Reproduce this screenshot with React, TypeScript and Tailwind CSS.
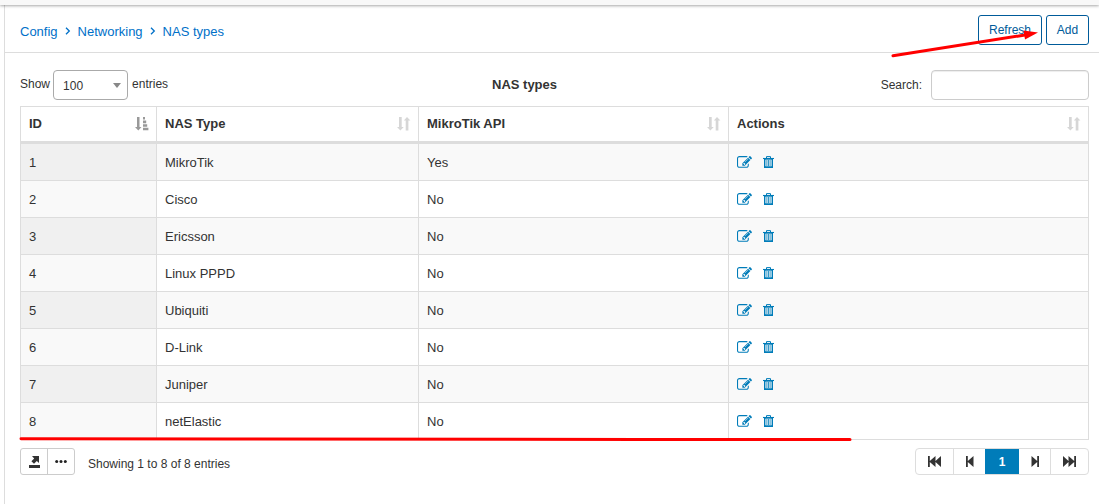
import type { ReactNode } from "react";

const rows = [
  ["1", "MikroTik", "Yes"],
  ["2", "Cisco", "No"],
  ["3", "Ericsson", "No"],
  ["4", "Linux PPPD", "No"],
  ["5", "Ubiquiti", "No"],
  ["6", "D-Link", "No"],
  ["7", "Juniper", "No"],
  ["8", "netElastic", "No"],
];

function EditIcon() {
  return (
    <svg className="h-[15px] w-[15px]" viewBox="0 0 1792 1792" fill="currentColor">
      <path d="M888 1184l116-116-152-152-116 116v56h96v96h56zm440-720q-16-16-33 1l-350 350q-17 17-1 33t33-1l350-350q17-17 1-33zm80 594v190q0 119-84.5 203.5t-203.5 84.5h-832q-119 0-203.5-84.5t-84.5-203.5v-832q0-119 84.5-203.5t203.5-84.5h832q63 0 117 25 15 7 18 23 3 17-9 29l-49 49q-14 14-32 8-23-6-45-6h-832q-66 0-113 47t-47 113v832q0 66 47 113t113 47h832q66 0 113-47t47-113v-126q0-13 9-22l64-64q15-15 35-7t20 29zm-96-738l288 288-672 672h-288v-288zm444 132l-92 92-288-288 92-92q28-28 68-28t68 28l152 152q28 28 28 68t-28 68z" />
    </svg>
  );
}

function TrashIcon() {
  return (
    <svg className="h-[12px] w-[11px]" viewBox="0 0 11 12" fill="none" stroke="currentColor">
      <path d="M0 2.5h11" strokeWidth="1.1" />
      <path d="M3.5 2.4V.6h4v1.8" strokeWidth="1" />
      <path d="M1.7 2.5v8.8h7.6V2.5" strokeWidth="1.4" />
      <path d="M3.9 4v6M5.5 4v6M7.1 4v6" strokeWidth=".8" />
      <path d="M1.5 3.2h8M1.5 11h8" strokeWidth="1" />
    </svg>
  );
}

function SortIcon({ active }: { active?: boolean }) {
  return active ? (
    <svg className="h-[14px] w-[14px]" viewBox="0 0 14 14" fill="#999">
      <path d="M2 0h2.5v10h2L3.3 13.5 0 10h2zM8 0h2v2.6H8zM8 3.6h3.2v2.6H8zM8 7.2h4.2v2.6H8zM8 10.8h5.4v2.5H8z" />
    </svg>
  ) : (
    <svg className="h-[14px] w-[14px]" viewBox="0 0 14 14" fill="#d6d6d6">
      <path d="M2 0h2.7v10h2L3.4 13.5 0 10h2zM8.7 13.4h2.7V3.5h2L10 0 6.8 3.5h1.9z" />
    </svg>
  );
}

function Head({ children, active }: { children: ReactNode; active?: boolean }) {
  return (
    <th className="h-[34px] border-r border-[#ddd] p-0 pr-[7px] pl-2 text-left font-bold">
      <div className="flex items-center justify-between">
        <span>{children}</span>
        <SortIcon active={active} />
      </div>
    </th>
  );
}

function PageIcon({ kind }: { kind: "first" | "prev" | "next" | "last" }) {
  const double = kind === "first" || kind === "last";
  const flip = kind === "next" || kind === "last";
  return (
    <svg
      className={double ? "h-[11px] w-[13px]" : "h-[11px] w-[8px]"}
      viewBox={double ? "0 0 13 11" : "0 0 8 11"}
      fill="#333"
    >
      <g transform={flip ? (double ? "matrix(-1 0 0 1 13 0)" : "matrix(-1 0 0 1 8 0)") : undefined}>
        <path d={double ? "M0 0h1.8v5L7.5 0v5L13 0v11L7.5 6v5L1.8 6v5H0z" : "M0 0h1.8v5L7.5 0v11L1.8 6v5H0z"} />
      </g>
    </svg>
  );
}

function Chevron() {
  return (
    <svg className="mx-[7px] mb-px h-[8px] w-[6px]" viewBox="0 0 6 8" fill="none" stroke="#0070c8" strokeWidth="1.3">
      <path d="M1 .7l3.3 3.3L1 7.3" />
    </svg>
  );
}

export default function App() {
  return (
    <div className="relative flex h-[504px] w-[1099px] flex-col overflow-hidden bg-white font-['Liberation_Sans',Arial,sans-serif] text-[13px] text-[#333]">
      <div className="z-10 h-[5px] shrink-0 bg-[#f8f8f8] shadow-[0_1px_3px_rgba(0,0,0,0.35)]" />
      <div className="ml-1 flex flex-1 flex-col border-l border-[#ddd]">
        <header className="flex h-[48px] shrink-0 items-center justify-between border-b border-[#ddd] pr-[10px] pl-[15px]">
          <nav className="flex items-center pt-[6px] text-[#0070c8]">
            <a>Config</a>
            <Chevron />
            <a>Networking</a>
            <Chevron />
            <a>NAS types</a>
          </nav>
          <div className="flex gap-1 pt-[3px] text-[12px] text-[#005b9a]">
            <button className="h-[30px] w-[64px] rounded-[3px] border border-[#005b9a]">Refresh</button>
            <button className="h-[30px] w-[43px] rounded-[3px] border border-[#005b9a]">Add</button>
          </div>
        </header>

        <main className="pt-[17px] pr-[10px] pl-[15px]">
          <div className="grid h-[30px] grid-cols-[472px_auto_1fr] items-center text-[12px]">
            <div className="flex items-center">
              <span className="pb-[3px]">Show</span>
              <div className="ml-[3px] flex h-[30px] w-[75px] items-center justify-between rounded-[4px] border border-[#aaa] pr-[6px] pl-[9px]">
                <span className="pt-px">100</span>
                <span className="border-x-4 border-t-[5px] border-x-transparent border-t-[#888]" />
              </div>
              <span className="ml-1 pb-[3px]">entries</span>
            </div>
            <b className="pb-px text-[13px]">NAS types</b>
            <label className="flex items-center justify-end gap-[9px]">
              Search:
              <input className="h-[30px] w-[158px] rounded-[4px] border border-[#ccc] shadow-[inset_0_1px_1px_rgba(0,0,0,0.075)]" />
            </label>
          </div>

          <table className="mt-[6px] w-[1069px] table-fixed border-separate border-spacing-0 border-t border-l border-[#ddd]">
            <colgroup>
              <col className="w-[136px]" />
              <col className="w-[262px]" />
              <col className="w-[310px]" />
              <col className="w-[360px]" />
            </colgroup>
            <thead>
              <tr>
                <Head active>ID</Head>
                <Head>NAS Type</Head>
                <Head>MikroTik API</Head>
                <Head>Actions</Head>
              </tr>
              <tr>
                <td colSpan={4} className="h-[3px] bg-[#ddd] p-0" />
              </tr>
            </thead>
            <tbody>
              {rows.map(([id, name, api], i) => (
                <tr key={id} className={i % 2 ? "bg-white" : "bg-[#f9f9f9]"}>
                  <td className={`h-[37px] border-r border-b border-[#ddd] p-0 pt-[2px] pl-2 ${i % 2 ? "bg-[#f9f9f9]" : "bg-[#f0f0f0]"}`}>{id}</td>
                  <td className="border-r border-b border-[#ddd] p-0 pt-[2px] pl-2">{name}</td>
                  <td className="border-r border-b border-[#ddd] p-0 pt-[2px] pl-2">{api}</td>
                  <td className="border-r border-b border-[#ddd] p-0 pl-2">
                    <div className="flex items-center gap-[11px] text-[#007cb9]">
                      <EditIcon />
                      <TrashIcon />
                    </div>
                  </td>
                </tr>
              ))}
            </tbody>
          </table>

          <div className="mt-2 flex h-[27px] items-center text-[12px]">
            <div className="flex h-[27px] w-[55px] rounded-[3px] border border-[#ccc]">
              <span className="flex w-[27px] items-center justify-center border-r border-[#ccc]">
                <svg className="h-[12px] w-[11px]" viewBox="0 0 11 12" fill="#333">
                  <path d="M3 0h7v7L7.8 5 5 7.7 2.4 5.2 5.2 2.4zM0 9h11v3H0z" />
                </svg>
              </span>
              <span className="flex flex-1 items-center justify-center">
                <svg className="h-[3px] w-[12px]" viewBox="0 0 12 3" fill="#222">
                  <circle cx="1.7" cy="1.5" r="1.5" />
                  <circle cx="6" cy="1.5" r="1.5" />
                  <circle cx="10.3" cy="1.5" r="1.5" />
                </svg>
              </span>
            </div>
            <span className="ml-[13px] pt-1">Showing 1 to 8 of 8 entries</span>
            <div className="ml-auto flex h-[27px] w-[174px] overflow-hidden rounded-[4px] border border-[#ddd]">
              <span className="flex w-[38px] items-center justify-center border-r border-[#ddd]">
                <PageIcon kind="first" />
              </span>
              <span className="flex w-[31px] items-center justify-center">
                <PageIcon kind="prev" />
              </span>
              <span className="-my-px flex w-[34px] items-center justify-center bg-[#007cb9] font-bold text-white">1</span>
              <span className="flex w-[32px] items-center justify-center border-r border-[#ddd]">
                <PageIcon kind="next" />
              </span>
              <span className="flex flex-1 items-center justify-center">
                <PageIcon kind="last" />
              </span>
            </div>
          </div>
        </main>
      </div>

      <svg className="pointer-events-none absolute inset-0 z-20 h-full w-full" viewBox="0 0 1099 504">
        <path d="M893 55.7L1025 35" stroke="#f00" strokeWidth="3" strokeLinecap="round" />
        <path d="M1038 32.5L1023.5 30.5L1025 39.5z" fill="#f00" />
        <path d="M21 438.7L228 439L640 439.5L850 439.5" fill="none" stroke="#f00" strokeWidth="3" strokeLinecap="round" />
      </svg>
    </div>
  );
}
